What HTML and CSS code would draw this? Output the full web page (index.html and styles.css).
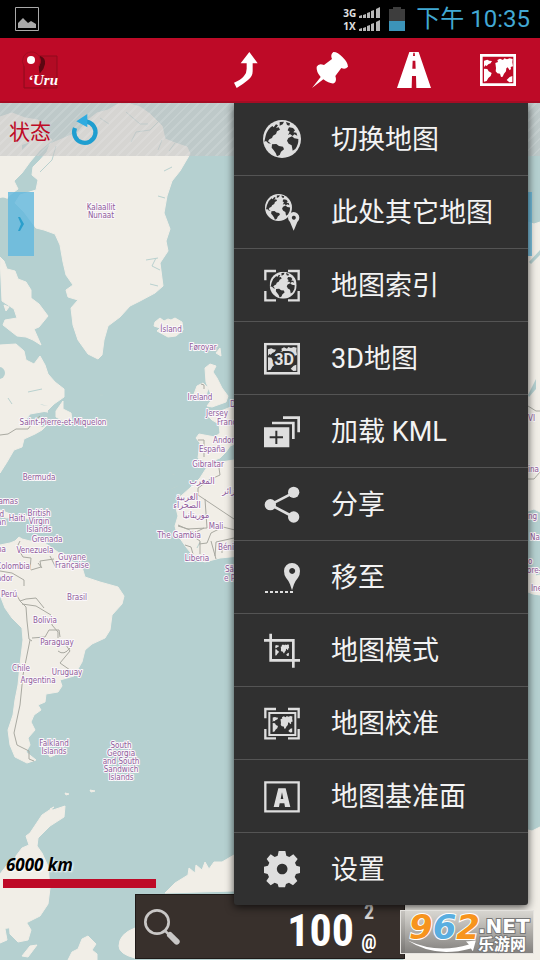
FILE: index.html
```html
<!DOCTYPE html>
<html lang="zh-CN">
<head>
<meta charset="utf-8">
<meta name="viewport" content="width=device-width, initial-scale=1">
<title>地图</title>
<link rel="stylesheet" href="styles.css">
</head>
<body>
<svg class="sprite" aria-hidden="true">
  <symbol id="continents" viewBox="0 0 108 96">
    <path d="M12 20l10-3 6 3 8 1-4 7-7 3-5 5-4-2-4 6zM12 44l10 1 4 7 9 5-3 9-7 6-5 9-8 2zM46 27l8-3-2-6 8-4 9 4 4-5 8 3 8-3 9 2-1 10 2 12-7 2 1 6-4 4-6-9-4 3-1 9-6 7-4 9-5 1-3-10-8-1-5-6 1-10zM80 78l9-9 8-3v18l-9 1z"/>
  </symbol>
  <symbol id="world" viewBox="0 0 108 96">
    <path fill="none" stroke="currentColor" stroke-width="8" d="M4 4h100v88H4z"/>
    <use href="#continents"/>
  </symbol>
  <symbol id="globe" viewBox="0 0 114 114">
    <circle cx="57" cy="57" r="57"/>
    <g class="cut">
      <path d="M8 47q5-19 20-29l4 4 7-9 6 3-6 8 8-2 4 7-9 5-3 8-9 5-3 7-8 4-4 6 9 7-8-1-7-7-5 2z"/>
      <path d="M27 73l13-1 8 6 12 2 3 8-9 7-4 10-8 4-4-10-7-10-5-6z"/>
      <path d="M50 6l13-1-4 8-9 4zM69 6l12 4-2 7-7-2zM78 22l12 2 6 7-5 6 9 1 3 9-9-4-5 5-8-6-6 3 5-10-6-4z"/>
      <path d="M76 54l11-5 7 6 12 2q1 16-9 30l-8 5-3-16-9-5-5-9z"/>
    </g>
  </symbol>
  <symbol id="brackets" viewBox="0 0 108 108">
    <path fill="none" stroke="currentColor" stroke-width="7" d="M36 12H4v28M72 12h32v28M4 72v28h32M104 72v28H72"/>
  </symbol>
</svg>

<div class="status-bar">
  <svg class="picture" viewBox="0 0 24 24" aria-hidden="true"><path fill="none" stroke="#a9a9a9" stroke-width="1" d="M.5.5h23v23H.5z"/><path fill="#a9a9a9" d="M3 21v-5l3-3 2-2 3 3 2 2 3-2 5 3v4z"/></svg>
  <div class="signals">
    <div class="signal"><span>3G</span><svg viewBox="0 0 21 11"><path d="M0 11v-2l3-1v3zM4 11V8l3-1v4zM8 11V6l3-1v6zM12 11V4l3-1v8zM17 11V2l4-2v11z"/></svg></div>
    <div class="signal"><span>1X</span><svg viewBox="0 0 21 11"><path d="M0 11v-2l3-1v3zM4 11V8l3-1v4zM8 11V6l3-1v6zM12 11V4l3-1v8zM17 11V2l4-2v11z"/></svg></div>
  </div>
  <svg class="battery" viewBox="0 0 16 24" aria-hidden="true"><path fill="#3d3d3d" d="M0 2h4V0h8v2h4v12H0z"/><path fill="#3c94b9" d="M0 14h16v10H0z"/></svg>
  <time class="clock">下午 10:35</time>
</div>

<header class="action-bar">
  <a class="logo" href="#" aria-label="Oru">
    <svg viewBox="0 0 36 38">
      <path fill="#b20b24" stroke="#8f0a1d" stroke-width="1" d="M2 5h33v32H2z"/>
      <path fill="#5b0712" d="M18 5q6 2 5 8-1 5-4 8l-3 4z"/>
      <path fill="#be0a27" stroke="#a30c22" stroke-width="1" d="M9 1a9 9 0 0 0-7 14l7 12 8-12A9 9 0 0 0 9 1z"/>
      <path fill="#be0a27" d="M3 14h13l2 10-1 12H3z"/>
      <circle cx="9" cy="9" r="4" fill="#fff"/>
      <text x="6" y="34" class="logo-text">‘Uru</text>
    </svg>
  </a>
  <button type="button" aria-label="路线"><svg viewBox="0 0 108 108"><path d="M64 0l25 34H74v24q0 16-14 26-14 12-34 24l-8-16q20-8 30-20 8-8 8-22V34H38z"/></svg></button>
  <button type="button" aria-label="航点"><svg viewBox="0 0 108 108"><path d="M0 108l26-33Q12 58 14 44q6-12 22-5l24-18Q54 8 64 0q12-1 28 16 16 16 16 28-8 10-20 4L70 72q6 16-4 22-14 2-32-12z"/></svg></button>
  <button type="button" aria-label="航迹"><svg viewBox="0 0 108 108"><path fill-rule="evenodd" d="M40 0h28l37 108H3zM52 2l-1 10h6L56 2zM50 26l-1 24h10l-1-24zM48 72l-1 36h14l-1-36z"/></svg></button>
  <button type="button" aria-label="地图"><svg viewBox="0 0 108 96"><use href="#world"/></svg></button>
</header>

<main class="map">
  <svg class="canvas" viewBox="0 103 540 857" preserveAspectRatio="xMinYMin slice">
    <g class="land">
      <path d="M118 104l-10 6-11 3-9 7-10 12-16 7-12 5-3 8-7 8-7 7-1 8 6 5-2 10-16 5-5 8 9 9 12 16 8 2 11 4 5 11 3 17 3 13 7 10-7 5 2 7 10 3-7 8 2 17 5 15 10 14 10 5 4-4 2-15 4-14 12-9 10-11 10-5 15-8 8-7-3-23 8-12-2-10 4-12-6-16 3-17 5-15 8-10 10-17-3-7-12-4-10-4-3-13-12-12-10-7-10-3z"/>
      <path d="M0 117l12-4 13 5 13 2 4 12 10 8-12 10-10 12-8 11-8 8 4 8-8 6-10 12z"/>
      <path d="M0 257l4 4 3 8 8 2 3 8 8 3 5 8 0 8 8 6 9 12-9 11-5 2 7 16-8-5-7-3-9-1-14-11 2-5 12-2-3-9-12-8zM4 305l5 2-3 4zM16 352l5 3-1 5-5-2z"/>
      <path d="M0 345l16-1 8 7 2 9 8 4 6-8 5 9 3 9 7 8 9 7v8l-10 7-7 7-17 3-7 10 12-3 8-4-3 8 2 3 8-6-8 8-7 4-11 5-2 8-8 3-7 12-7 11z"/>
      <path d="M56 411l7-10 0 8 8 4 1 7-6 2-10-5zM40 409l8 3-8-1zM0 510l8 3 8 4-10 1-6-4zM22 516l8 0-2 3z"/>
      <path d="M155 322l5-4 4 3 4-2 3 1 4-2 7 4 1 8-7 6-8 1-11-6 3-3-6-2z"/>
      <path d="M205 368l5-4 6 2-3 6 4 6 5 10 6 8-2 6-14 5-5-1 6-8-4-8-3-8z"/>
      <path d="M197 386l6-3 5 5-2 9-10 3-2-6zM216 353l4-5 1 8z"/>
      <path d="M240 403l-14 6-8 3-12 2 6 6 7 4 1 9-5 4-16-3-3 4 4 5-2 15 6 3 6 1 10-4 6-6 4-6 10-4z"/>
      <path d="M240 459l-25 4-8 4-7 11-10 10-9 8-5 12 2 8-3 10 2 8 9 13 9 11 10 4 15-4 20-2z"/>
      <path d="M0 545l10-2 5-2 4-4 3 2 8 2 12 0 10 7 10 7 16 10 4 2 3 10 15 5 18 5 6 9-2 8-10 11-2 15-5 8-13 6-7 6-3 12-8 14-14 4 2 6-4 6-12 2-1 8-7 3 3 5-7 5-3 7 4 8-7 8 2 7-4 7 10 8-9 3-12-6-5-12-2-15 5-15 2-15 3-15 2-20 3-25-1-12-10-10-7-10-5-13z"/>
      <path d="M47 752l8 3-5 2zM40 743l8 1-3 4zM65 793l4 1-3 1zM90 790l5 1-4 1z"/>
      <path d="M65 806l-12 4-3-1 4-2-12 8-6 9-6 9-4 3 3 9-7 3-6 8-1 9-8 0-7 9v55l8-1 12-2 20-10 8-12 2-16-2-22-6-13-5-7 1-8 12-12 14-9z"/>
      <path d="M9 920l16 0 6 10-3 10-10 2-8-8zM22 956l8-10 7-1-9 12zM0 928l5 1 2 11-7 3zM68 960l4-8 6-3 4-10 6-3 8 8-4 6 5 4v6zM135 928q-16 6-16 18 0 8 16 12z"/>
      <path d="M165 893l10-10 13-8 1-7 6 5 1-8 6 5 3-8 4 7 5-7 8 0 12-7v36zM404 890l124-60 4 1 8-4v133H404z"/>
      <path d="M528 222l6 2 6-2v290l-6-3-6 2zM528 575l5-8 3 9 4-1v20l-7-1-5-2z"/>
    </g>
    <g class="water">
      <circle cx="-1" cy="373" r="6"/>
      <path d="M0 198q8-2 10 6l-2 14-8 10zM22 145l8-3-8 8zM40 404l8 2-6-1zM529 262l11-12v5l-9 9zM528 395l8-16v10l-7 8z"/>
    </g>
    <path class="coast" d="M40 172l12-12 4-14M100 118l9 6M126 112l14 12 8 0M158 122l-8 8-14 2-5 10M162 140l-4 10M175 143l-6 8M172 167l-8 4M165 198l-7-2M158 258l-12 2M160 270l-8-4 4-8M150 284l8 2M28 392l14-3M8 398l4 6M60 120l-14 3M100 395l3 0M140 453l10 3M152 523l3 2M171 489l7-3M172 474l3 1M200 542l-3 6"/>
    <path class="border" d="M0 435l8-1 8-5 12 0 6-8 6-5M198 440l6 0 0 17M219 468l1 7-11 5-11 8v8M198 495l36 24M205 499l2 29-20 1-9-4M178 526l10 3 6 4 10-5M185 545l6 2 2 7M194 537l6 4 0 13M199 544l8-1 4-10 12-6 12 3M211 541l5 18M215 556l1-14 18-4M222 553v-10M20 541l-3 6 6 10 8 1-1 12M31 570l10-3-1-6 14-2M38 563l4 5M50 556l6 12M0 571l12 2 12 7v6M14 590l6 11 6-2 10-1 8 10M20 601l6 6 1 14 2 18 3 2M22 604l14 2 15 9 1 10 6 7v6M32 638l13-1 4-7 10 0 1 7M58 651q6 5 12-3M60 641l6 4 4 6-10 12 10 7M30 640l-4 20-3 15-3 30-6 28 3 12 12 6v8l5 2M201 384l3 1v4M528 406l8 5 4 0M528 479h6l6-7"/>
    <g class="labels">
      <text x="101" y="210">Kalaallit<tspan x="101" y="218">Nunaat</tspan></text>
      <text x="171" y="332">Ísland</text>
      <text x="203" y="350">Føroyar</text>
      <text x="200" y="400">Ireland</text>
      <text x="217" y="416">Jersey</text>
      <text x="230" y="407" class="start">De</text>
      <text x="217" y="425" class="start">France</text>
      <text x="213" y="443" class="start">Andorra</text>
      <text x="212" y="452">España</text>
      <text x="208" y="467">Gibraltar</text>
      <g class="arabic">
        <text x="202" y="484">المغرب</text>
        <text x="234" y="494">الجزائر</text>
        <text x="187" y="500">الغربية<tspan x="187" y="508">الصحراء</tspan></text>
        <text x="196" y="518">موريتانيا</text>
      </g>
      <text x="216" y="529">Mali</text>
      <text x="179" y="538">The Gambia</text>
      <text x="218" y="550" class="start">Bénin</text>
      <text x="197" y="561">Liberia</text>
      <text x="225" y="572" class="start">São</text>
      <text x="224" y="581" class="start">e Pr</text>
      <text x="63" y="425">Saint-Pierre-et-Miquelon</text>
      <text x="39" y="480">Bermuda</text>
      <text x="18" y="504" class="end">Bahamas</text>
      <text x="4" y="517" class="end">and<tspan x="6" y="525">ean</tspan></text>
      <text x="17" y="521">Haiti</text>
      <text x="39" y="516">British<tspan x="39" y="524">Virgin</tspan><tspan x="39" y="532">Islands</tspan></text>
      <text x="47" y="542">Grenada</text>
      <text x="35" y="553">Venezuela</text>
      <text x="6" y="552" class="end">ama</text>
      <text x="72" y="560">Guyane<tspan x="72" y="568">Française</tspan></text>
      <text x="30" y="569" class="end">Colombia</text>
      <text x="13" y="581" class="end">Ecuador</text>
      <text x="9" y="597">Perú</text>
      <text x="77" y="600">Brasil</text>
      <text x="45" y="623">Bolivia</text>
      <text x="57" y="645">Paraguay</text>
      <text x="21" y="671">Chile</text>
      <text x="67" y="675">Uruguay</text>
      <text x="38" y="683">Argentina</text>
      <text x="54" y="746">Falkland<tspan x="54" y="754">Islands</tspan></text>
      <text x="121" y="748">South<tspan x="121" y="756">Georgia</tspan><tspan x="121" y="764">and South</tspan><tspan x="121" y="772">Sandwich</tspan><tspan x="121" y="780">Islands</tspan></text>
      <text x="528" y="421" class="start">VI</text>
      <text x="528" y="472" class="start">ina</text>
      <text x="528" y="519" class="start">ng</text>
      <text x="530" y="540" class="start">Na</text>
      <text x="528" y="564" class="start">o</text>
      <text x="527" y="573" class="start">ore-</text>
      <text x="531" y="591" class="start">Ine</text>
    </g>
  </svg>

  <div class="state-strip">
    <span>状态</span>
    <button type="button" aria-label="刷新"><svg viewBox="0 0 81 93"><path fill="none" stroke="#1f9ed0" stroke-width="13" d="M44 23A32 32 0 1 1 9 42"/><path fill="#2fabe0" d="M13 22L46 0v40z"/></svg></button>
  </div>

  <button type="button" class="tab tab-left" aria-label="展开左侧"><svg viewBox="0 0 8 14"><path d="M1 0h2l4 7-4 7H1l3-7z"/></svg></button>
  <button type="button" class="tab tab-right" aria-label="展开右侧"></button>

  <div class="scale"><span>6000 km</span></div>

  <div class="zoom-panel">
    <svg viewBox="0 0 108 108" aria-hidden="true"><circle cx="39" cy="39" r="35" fill="none" stroke="#c9c7c6" stroke-width="8"/><path fill="none" stroke="#c9c7c6" stroke-width="8" d="M62 64l12 12"/><path fill="none" stroke="#c9c7c6" stroke-width="18" stroke-linecap="round" d="M78 78l20 20"/></svg>
    <strong>100</strong>
    <div class="zoom-side"><span>2</span><b>@</b></div>
  </div>

  <nav class="menu">
    <button type="button"><svg viewBox="0 0 108 108"><use href="#globe" x="-3" y="-3" width="114" height="114"/></svg><span>切换地图</span></button>
    <button type="button"><svg viewBox="0 0 108 108"><use href="#globe" x="3" y="0" width="81" height="81"/><path fill-rule="evenodd" d="M89 110l-11-26q-6-6-6-13a17 17 0 0 1 34 0q0 7-6 13zM89 65a6 6 0 1 0 1 0z"/></svg><span>此处其它地图</span></button>
    <button type="button"><svg viewBox="0 0 108 108"><use href="#brackets"/><use href="#globe" x="17" y="14" width="81" height="81"/></svg><span>地图索引</span></button>
    <button type="button"><svg viewBox="0 0 108 108"><use href="#world" y="8" width="108" height="96"/><text x="60" y="76" class="icon-3d">3D</text></svg><span>3D地图</span></button>
    <button type="button"><svg viewBox="0 0 108 108"><path d="M0 43h76v60H0zM24 26h68v52h-8V34H24zM57 10h51v48h-8V18H57z"/><path fill="none" class="plus" d="M17 73h40M37 53v40"/></svg><span>加载 KML</span></button>
    <button type="button"><svg viewBox="0 0 108 108"><path fill="none" stroke="currentColor" stroke-width="8" d="M89 20L19 56l70 37"/><circle cx="19" cy="56" r="17"/><circle cx="89" cy="19" r="17"/><circle cx="89" cy="93" r="17"/></svg><span>分享</span></button>
    <button type="button"><svg viewBox="0 0 108 108"><path fill-rule="evenodd" d="M84 94l-6-18q-4-11-12-20-6-8-6-20a24 24 0 0 1 48 0q0 12-6 20-8 9-12 20zM84 27a9 9 0 1 0 1 0z"/><path fill="none" stroke="currentColor" stroke-width="6" stroke-dasharray="9 6" d="M3 99h84"/></svg><span>移至</span></button>
    <button type="button"><svg viewBox="0 0 108 108"><path fill="none" stroke="currentColor" stroke-width="8" d="M20 5v80h88M0 25h88v82"/><use href="#continents" x="24" y="31" width="60" height="46"/></svg><span>地图模式</span></button>
    <button type="button"><svg viewBox="0 0 108 108"><use href="#brackets"/><path fill="none" stroke="currentColor" stroke-width="6" d="M16 24h78v66H16z"/><use href="#continents" x="14" y="24" width="82" height="66"/></svg><span>地图校准</span></button>
    <button type="button"><svg viewBox="0 0 108 108"><path fill="none" stroke="currentColor" stroke-width="7" d="M4 13h100v87H4z"/><path fill-rule="evenodd" d="M43 31h22l14 56H63l-2-11H47l-2 11H29zM50 63h8l-4-20z"/></svg><span>地图基准面</span></button>
    <button type="button"><svg viewBox="0 0 108 108"><path fill-rule="evenodd" d="M44 0h20l3 14 9 4 12-8 13 14-8 11 4 9 11 3v19l-12 3-4 9 8 12-13 13-12-8-9 4-3 10H44l-3-10-9-4-12 8L7 90l8-12-4-9-11-3V47l12-3 4-9-8-11L20 10l12 8 9-4zM54 38a16 16 0 1 0 1 0z"/></svg><span>设置</span></button>
  </nav>

  <div class="watermark">
    <svg viewBox="0 0 134 44" aria-hidden="true"><path d="M7 30q30 14 62 4l-3-3 10-1-3 11-2-3Q34 48 7 30z"/></svg>
    <div class="digits">9<i>6</i>2</div>
    <div class="site"><span>.NET</span><span class="site-cn">乐游网</span></div>
  </div>
</main>
</body>
</html>
```

FILE: styles.css
```css
* {
  box-sizing: border-box;
}

body {
  margin: 0;
  min-height: 100vh;
  display: flex;
  flex-direction: column;
  background: #b5d0d0;
  font-family: Roboto, "Noto Sans CJK SC", sans-serif;
  overflow-x: hidden;
}

button {
  margin: 0;
  padding: 0;
  border: 0;
  background: none;
  color: inherit;
  font: inherit;
}

svg {
  display: block;
  fill: currentColor;
  overflow: visible;
}

.sprite {
  position: absolute;
  width: 0;
  height: 0;
}

/* System status bar */
.status-bar {
  height: 38px;
  padding: 0 10px 0 15px;
  display: flex;
  align-items: center;
  background: #000;
}

.picture {
  width: 24px;
  height: 24px;
  margin-right: auto;
}

.signals {
  display: grid;
  gap: 1px;
}

.signal {
  display: flex;
  align-items: center;
  gap: 3px;
  color: #b8b8b8;
  font: bold 10px/12px "Open Sans", sans-serif;
}

.signal span {
  color: #e0e0e0;
}

.signal svg {
  width: 21px;
  height: 11px;
}

.battery {
  width: 16px;
  height: 24px;
  margin: 0 11px 0 9px;
}

.clock {
  color: #42a9d4;
  font-size: 24px;
  line-height: 36px;
}

/* Action bar */
.action-bar {
  height: 65px;
  padding-left: 22px;
  display: flex;
  align-items: center;
  background: #be0a27;
  border-bottom: 2px solid #a50c24;
  color: #fff;
}

.logo {
  margin-right: auto;
  color: #fff;
}

.logo svg {
  width: 36px;
  height: 38px;
}

.logo-text {
  font: italic bold 15px "Liberation Serif", serif;
}

.action-bar button {
  width: 84px;
  height: 63px;
  display: grid;
  place-items: center;
}

.action-bar button svg {
  width: 36px;
}

/* Map */
.map {
  flex: 1;
  position: relative;
  overflow: hidden;
}

.canvas {
  position: absolute;
  inset: 0;
  width: 100%;
  height: 100%;
}

.land {
  fill: #f1eee7;
  stroke: #f1eee7;
  stroke-width: 1;
}

.water {
  fill: #b5d0d0;
}

.coast {
  fill: none;
  stroke: #b9d1cf;
  stroke-width: 1;
}

.border {
  fill: none;
  stroke: #a9a9a1;
  stroke-width: 1;
}

.labels {
  fill: #8f5c9a;
  stroke: #fbf8fb;
  stroke-width: 2px;
  stroke-linejoin: round;
  paint-order: stroke;
  text-anchor: middle;
  font: 8px "DejaVu Sans Condensed", "DejaVu Sans", sans-serif;
}

.labels .arabic {
  font-size: 9px;
}

.labels .start {
  text-anchor: start;
}

.labels .end {
  text-anchor: end;
}

.state-strip {
  position: relative;
  height: 53px;
  padding-left: 9px;
  display: flex;
  align-items: center;
  gap: 21px;
  color: #be0a27;
  font-size: 21px;
  background:
    repeating-linear-gradient(135deg, rgba(255, 255, 255, 0.13) 0 2px, transparent 2px 7px),
    rgba(197, 197, 197, 0.6);
}

.state-strip svg {
  width: 27px;
  height: 31px;
}

.tab {
  position: absolute;
  top: 89px;
  width: 26px;
  height: 64px;
  display: grid;
  place-items: center;
  background: rgba(97, 184, 222, 0.8);
  color: #2a9fcc;
}

.tab svg {
  width: 8px;
  height: 14px;
}

.tab-left {
  left: 8px;
}

.tab-right {
  right: 8px;
}

.scale {
  position: absolute;
  left: 3px;
  bottom: 72px;
  width: 153px;
  padding-left: 3px;
  border-bottom: 9px solid #be0a27;
  color: #000;
  font: italic bold 17px/28px "Open Sans", sans-serif;
  text-shadow: 1px 1px 2px #fff;
}

.zoom-panel {
  position: absolute;
  left: 25%;
  bottom: 1px;
  width: 50%;
  height: 65px;
  padding: 0 26px 0 8px;
  display: flex;
  align-items: center;
  background: #38302c;
  border: 1px solid #1f1a18;
  color: #fff;
  font-family: "Roboto Condensed", "Liberation Sans Narrow", "DejaVu Sans Condensed", sans-serif;
}

.zoom-panel svg {
  width: 36px;
  height: 36px;
  margin-right: auto;
}

.zoom-panel strong {
  padding-top: 8px;
  font-size: 44px;
  line-height: 48px;
}

.zoom-side {
  width: 18px;
  margin-left: 6px;
  display: grid;
  gap: 4px;
  text-align: center;
  font-size: 20px;
  line-height: 26px;
}

.zoom-side span {
  color: #d6d4d3;
  font-weight: bold;
}

/* Overflow menu */
.menu {
  position: absolute;
  top: 0;
  right: 12px;
  width: 294px;
  background: #303030;
  border-radius: 0 0 3px 3px;
  box-shadow: 0 2px 8px rgba(0, 0, 0, 0.7);
  color: #f3f3f3;
}

.menu button {
  width: 100%;
  height: 73px;
  padding-left: 30px;
  display: flex;
  align-items: center;
  gap: 31px;
  border-bottom: 1px solid #545454;
  font-size: 27px;
  text-align: left;
}

.menu button:last-child {
  height: 72px;
  border-bottom: 0;
}

.menu span {
  padding-bottom: 4px;
}

.menu svg {
  width: 36px;
  height: 36px;
  color: #dedede;
}

.cut {
  fill: #303030;
}

.plus {
  stroke: #303030;
  stroke-width: 6;
}

.icon-3d {
  fill: #e4e4e4;
  stroke: #303030;
  stroke-width: 12px;
  paint-order: stroke;
  text-anchor: middle;
  font: bold 48px Roboto, sans-serif;
}

/* Site badge */
.watermark {
  position: absolute;
  right: 6px;
  bottom: 6px;
  width: 134px;
  height: 44px;
  padding: 1px 3px 0 8px;
  display: flex;
  border: 1px solid #e4e2de;
  background: linear-gradient(rgba(215, 213, 208, 0.9), rgba(125, 123, 120, 0.95));
  color: #fff;
  font-family: "DejaVu Sans", "Noto Sans CJK SC", sans-serif;
  font-weight: bold;
}

.watermark svg {
  position: absolute;
  inset: 0;
}

.digits {
  position: relative;
  color: #f7941d;
  font-size: 34px;
  line-height: 30px;
  font-style: italic;
  -webkit-text-stroke: 2px #fff;
  paint-order: stroke;
}

.digits i {
  color: #5aaee0;
}

.site {
  position: relative;
  display: grid;
  align-content: start;
  font-size: 20px;
  line-height: 20px;
  padding-top: 4px;
  margin-left: -2px;
  -webkit-text-stroke: 2px #777;
  paint-order: stroke;
}

.site-cn {
  font-size: 16px;
  line-height: 17px;
}
```
